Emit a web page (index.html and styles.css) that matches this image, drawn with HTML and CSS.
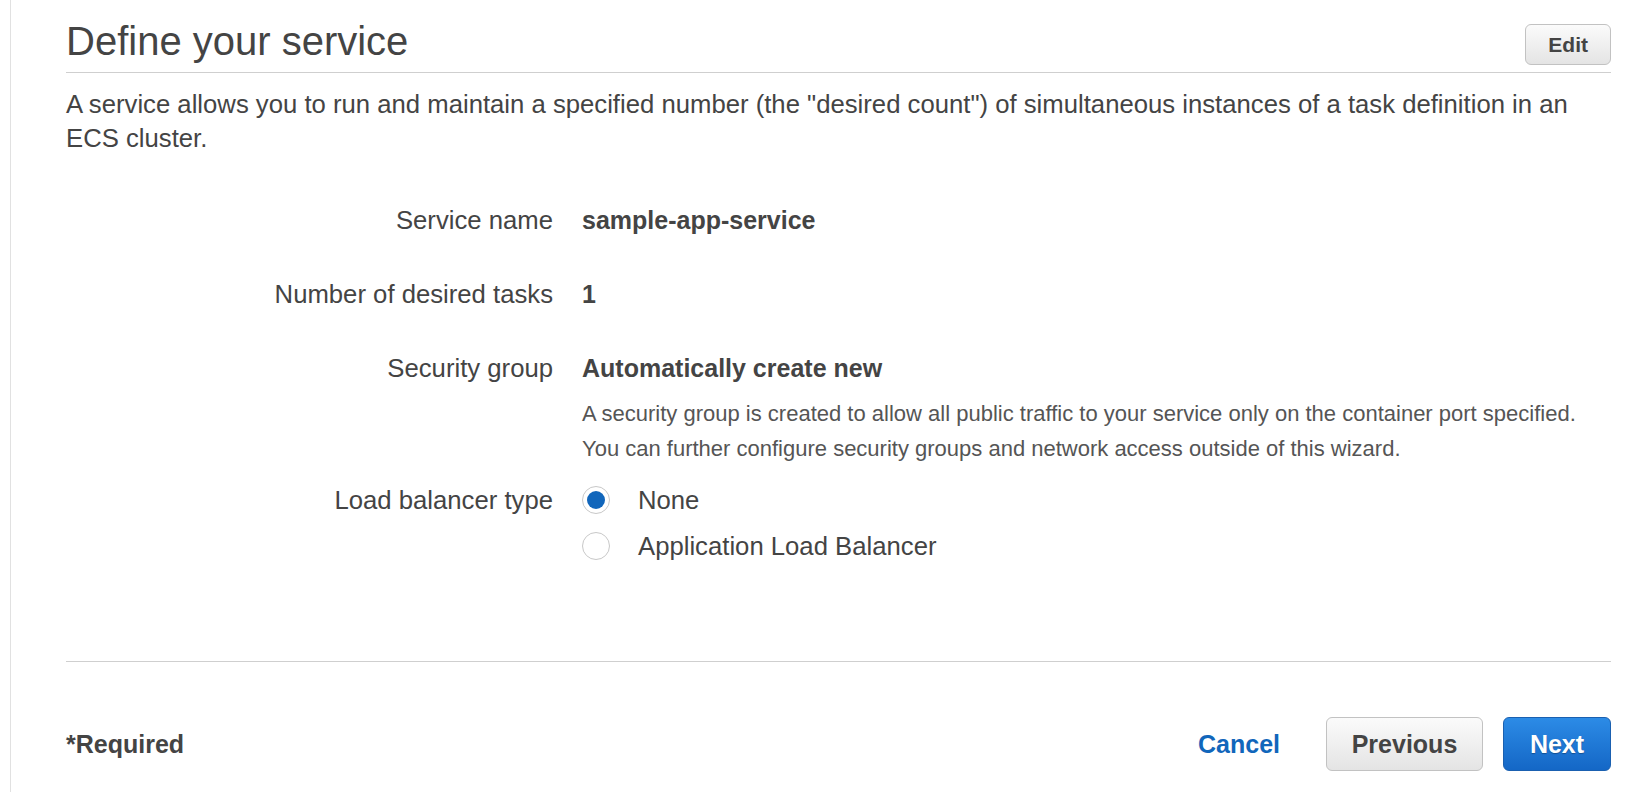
FILE: index.html
```html
<!DOCTYPE html>
<html lang="en">
<head>
    <meta charset="UTF-8">
    <meta name="viewport" content="width=device-width, initial-scale=1.0">
    <title>Define your service</title>
    <link rel="stylesheet" href="styles.css">
</head>
<body>
    <div class="page">
        <div class="header">
            <h1>Define your service</h1>
            <button class="btn btn-edit">Edit</button>
        </div>
        <p class="intro">A service allows you to run and maintain a specified number (the "desired count") of simultaneous instances of a task definition in an ECS cluster.</p>

        <div class="form">
            <div class="row">
                <div class="label">Service name</div>
                <div class="value">sample-app-service</div>
            </div>
            <div class="row">
                <div class="label">Number of desired tasks</div>
                <div class="value">1</div>
            </div>
            <div class="row">
                <div class="label">Security group</div>
                <div class="value">
                    Automatically create new
                    <p class="help">A security group is created to allow all public traffic to your service only on the container port specified.<br>You can further configure security groups and network access outside of this wizard.</p>
                </div>
            </div>
            <div class="row row-radio">
                <div class="label">Load balancer type</div>
                <div class="options">
                    <label class="option"><span class="radio checked"></span>None</label>
                    <label class="option"><span class="radio"></span>Application Load Balancer</label>
                </div>
            </div>
        </div>

        <div class="footer">
            <span class="required">*Required</span>
            <div class="actions">
                <a class="cancel" href="#">Cancel</a>
                <button class="btn btn-prev">Previous</button>
                <button class="btn btn-next">Next</button>
            </div>
        </div>
    </div>
</body>
</html>
```

FILE: styles.css
```css
body {
    font-family: "Liberation Sans", Arial, sans-serif;
    color: #444;
    background-color: white;
    margin: 0;
}
.page {
    margin-left: 10px;
    border-left: 1px solid #e1e1e1;
    padding: 0 29px 0 55px;
    min-height: 100vh;
    box-sizing: border-box;
}
.header {
    display: flex;
    justify-content: space-between;
    align-items: flex-end;
    padding: 17px 0 7px;
    border-bottom: 1px solid #cfcfcf;
}
.header h1 {
    margin: 0;
    font-size: 40px;
    line-height: 48px;
    font-weight: normal;
    color: #444;
}
.btn {
    font-family: "Liberation Sans", Arial, sans-serif;
    font-weight: bold;
    color: #444;
    border: 1px solid #c2c2c2;
    border-radius: 6px;
    background: linear-gradient(#fbfbfb, #e4e4e4);
    cursor: pointer;
}
.btn-edit {
    font-size: 21px;
    height: 41px;
    padding: 0 22px;
}
.intro {
    margin: 14px 0 0;
    font-size: 25.7px;
    line-height: 34px;
}
.form {
    margin-top: 48px;
    font-size: 25.7px;
    line-height: 34px;
}
.row {
    display: grid;
    grid-template-columns: 487px 1fr;
    column-gap: 29px;
    margin-bottom: 40px;
}
.row-radio {
    margin-top: -23px;
}
.label {
    text-align: right;
}
.value {
    font-weight: bold;
    font-size: 25px;
}
.help {
    margin: 11px 0 0;
    font-size: 22px;
    line-height: 35px;
    font-weight: normal;
    color: #555;
}
.options {
    display: flex;
    flex-direction: column;
    gap: 12px;
}
.option {
    display: flex;
    align-items: center;
    gap: 28px;
}
.radio {
    width: 28px;
    height: 28px;
    border: 1px solid #c8c8c8;
    border-radius: 50%;
    background: white;
    box-sizing: border-box;
    position: relative;
}
.radio.checked::after {
    content: "";
    position: absolute;
    left: 4px;
    top: 4px;
    width: 18px;
    height: 18px;
    border-radius: 50%;
    background-color: #1166bb;
}
.footer {
    margin-top: 98px;
    border-top: 1px solid #cfcfcf;
    padding-top: 55px;
    display: flex;
    justify-content: space-between;
    align-items: center;
}
.required {
    font-size: 25px;
    font-weight: bold;
}
.actions {
    display: flex;
    align-items: center;
}
.cancel {
    font-size: 25px;
    font-weight: bold;
    color: #1166bb;
    text-decoration: none;
    margin-right: 46px;
}
.btn-prev, .btn-next {
    font-size: 25px;
    height: 54px;
}
.btn-prev {
    width: 157px;
    margin-right: 20px;
}
.btn-next {
    width: 108px;
    color: white;
    border-color: #1a60b0;
    background: linear-gradient(#2c8be6, #1467c6);
    text-shadow: 0 1px 1px rgba(0,0,0,0.3);
}
```
